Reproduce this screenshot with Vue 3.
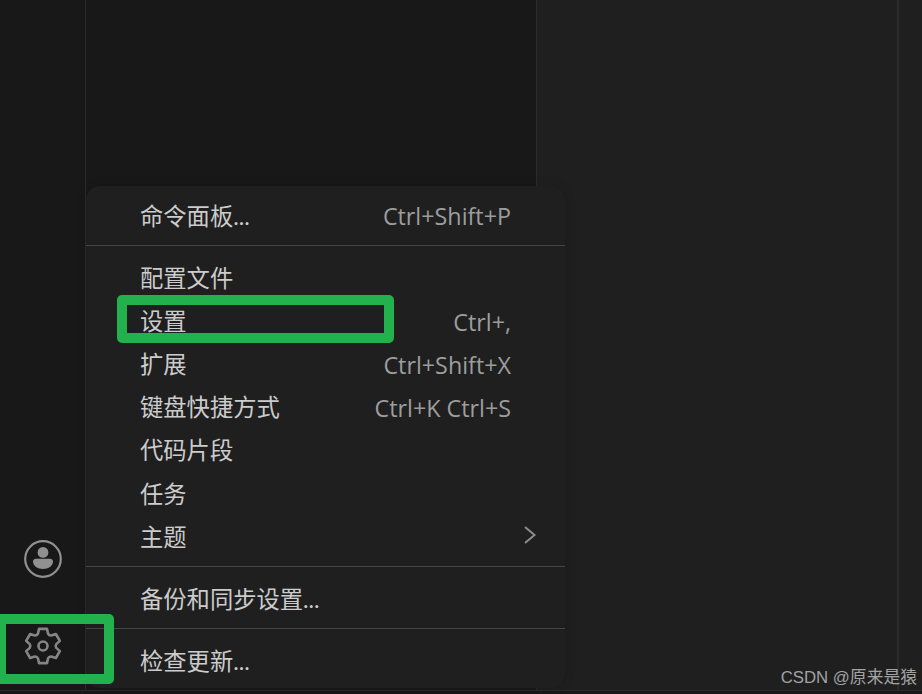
<template>
  <div class="window">
    <div class="panes">
      <aside class="activity-bar">
        <button class="activity-btn account" aria-label="账户">
          <svg width="40" height="40" viewBox="0 0 40 40" fill="none">
            <circle cx="20" cy="20" r="17.8" stroke="#909090" stroke-width="2.2" />
            <circle cx="20" cy="13.4" r="5.4" fill="#909090" />
            <path d="M10 22.500c0-1.600 1.300-2.700 3-2.700h14c1.700 0 3 1.100 3 2.700 0 4.500-4.500 7.500-10 7.500s-10-3-10-7.500z" fill="#909090" />
          </svg>
        </button>
        <button class="activity-btn gear" aria-label="管理">
          <svg width="40" height="40" viewBox="0 0 40 40" fill="none" stroke="#858585" stroke-width="2.600" stroke-linejoin="round">
            <path :d="gearPath" />
            <circle cx="20" cy="20" r="4.500" />
          </svg>
        </button>
      </aside>
      <section class="sidebar"></section>
      <main class="editor"></main>
      <div class="edge"></div>
    </div>
    <footer class="status-bar"></footer>

    <div class="menu">
      <template v-for="(group, i) in groups" :key="i">
        <div v-if="i > 0" class="separator"></div>
        <div v-for="item in group" :key="item.label" class="menu-item">
          <span class="label">{{ item.label }}</span>
          <span v-if="item.keys" class="keys">{{ item.keys }}</span>
          <svg v-if="item.submenu" class="chevron" width="14" height="20" viewBox="0 0 14 20" fill="none">
            <path d="M2 2l9.500 8L2 18" stroke="#8c8c8c" stroke-width="2" />
          </svg>
        </div>
      </template>
    </div>

    <div class="mark mark-settings"></div>
    <div class="mark mark-gear"></div>
    <div class="watermark">CSDN @原来是猿</div>
  </div>
</template>

<script setup>
const groups = [
  [{ label: '命令面板...', keys: 'Ctrl+Shift+P' }],
  [
    { label: '配置文件' },
    { label: '设置', keys: 'Ctrl+,' },
    { label: '扩展', keys: 'Ctrl+Shift+X' },
    { label: '键盘快捷方式', keys: 'Ctrl+K Ctrl+S' },
    { label: '代码片段' },
    { label: '任务' },
    { label: '主题', submenu: true }
  ],
  [{ label: '备份和同步设置...' }],
  [{ label: '检查更新...' }]
]

// six flat teeth with short rounded valleys, in a 40 x 40 box
function buildGear() {
  const pt = (r, deg) => {
    const a = (deg * Math.PI) / 180
    return `${(20 + r * Math.cos(a)).toFixed(2)} ${(20 + r * Math.sin(a)).toFixed(2)}`
  }
  let d = ''
  for (let k = 0; k < 6; k++) {
    const c = k * 60 - 90
    d += `${k === 0 ? 'M' : 'L'}${pt(17.6, c - 13)} L${pt(17.6, c + 13)} `
    d += `L${pt(13.4, c + 22)} Q${pt(12, c + 30)} ${pt(13.4, c + 38)} `
  }
  return d + 'Z'
}
const gearPath = buildGear()
</script>

<style scoped>
.window {
  position: relative;
  width: 922px;
  height: 694px;
  display: flex;
  flex-direction: column;
  overflow: hidden;
  background: #1f1f1f;
}
.panes {
  flex: 1;
  display: flex;
  min-height: 0;
}
.activity-bar {
  width: 85px;
  background: #181818;
  border-right: 1px solid #2b2b2b;
  display: flex;
  flex-direction: column;
  justify-content: flex-end;
  align-items: center;
  padding-bottom: 24px;
  gap: 47px;
  box-sizing: content-box;
}
.activity-btn {
  width: 40px;
  height: 40px;
  padding: 0;
  border: none;
  background: none;
  display: block;
}
.sidebar {
  width: 450px;
  background: #181818;
  border-right: 1px solid #2b2b2b;
}
.editor {
  flex: 1;
  background: #1f1f1f;
  border-right: 2px solid #2b2b2b;
}
.edge {
  width: 23px;
  background: #1f1f1f;
}
.status-bar {
  height: 3px;
  background: #181818;
  border-top: 1px solid #2b2b2b;
}

.menu {
  position: absolute;
  left: 86px;
  top: 186px;
  width: 479px;
  height: 502px;
  box-sizing: border-box;
  padding: 8.600px 0 0;
  background: #1f1f1f;
  border-radius: 14px;
  box-shadow: 0 0 12px rgba(0, 0, 0, 0.12);
  font-family: Lato, "Noto Sans CJK SC", sans-serif;
}
.menu-item {
  height: 43.200px;
  box-sizing: border-box;
  padding: 0 54px;
  display: flex;
  align-items: center;
  justify-content: space-between;
  color: #cccccc;
  font-size: 23.300px;
  white-space: nowrap;
}
.label {
  line-height: 1;
}
.keys {
  font-family: "Open Sans", sans-serif;
  font-size: 23.300px;
  color: #9d9d9d;
}
.chevron {
  margin: 0 -26px 6px 0;
}
.separator {
  height: 1px;
  margin: 7px 0 11px;
  background: #454545;
}

.mark {
  position: absolute;
  box-sizing: border-box;
  border: 10px solid #22b14c;
  border-radius: 5px;
  pointer-events: none;
}
.mark-settings {
  left: 117px;
  top: 295px;
  width: 277px;
  height: 48px;
}
.mark-gear {
  left: -4px;
  top: 614px;
  width: 118px;
  height: 70px;
}
.watermark {
  position: absolute;
  right: 5px;
  top: 664px;
  font-family: "Liberation Sans", "Noto Sans CJK SC", sans-serif;
  font-size: 16.800px;
  color: #a3a3a3;
  white-space: nowrap;
}
</style>
